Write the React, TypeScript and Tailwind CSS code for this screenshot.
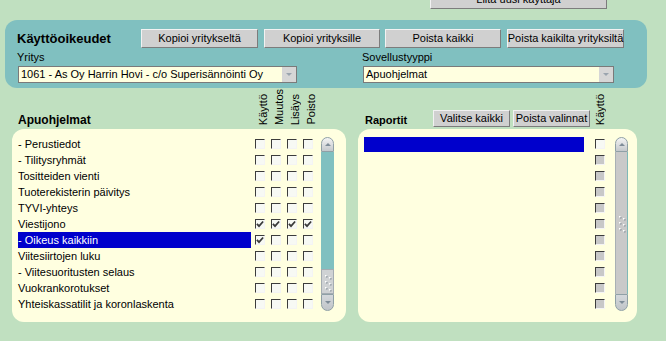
import React from "react";

const rows: { label: string; checks: number[]; selected?: boolean }[] = [
  { label: "- Perustiedot", checks: [0, 0, 0, 0] },
  { label: "- Tilitysryhmät", checks: [0, 0, 0, 0] },
  { label: "Tositteiden vienti", checks: [0, 0, 0, 0] },
  { label: "Tuoterekisterin päivitys", checks: [0, 0, 0, 0] },
  { label: "TYVI-yhteys", checks: [0, 0, 0, 0] },
  { label: "Viestijono", checks: [1, 1, 1, 1] },
  { label: "- Oikeus kaikkiin", checks: [1, 0, 0, 0], selected: true },
  { label: "Viitesiirtojen luku", checks: [0, 0, 0, 0] },
  { label: "- Viitesuoritusten selaus", checks: [0, 0, 0, 0] },
  { label: "Vuokrankorotukset", checks: [0, 0, 0, 0] },
  { label: "Yhteiskassatilit ja koronlaskenta", checks: [0, 0, 0, 0] },
];

function Btn({ className, children }: { className: string; children: React.ReactNode }) {
  return (
    <div
      className={
        "flex items-center justify-center shrink-0 whitespace-nowrap bg-[#d0d0d0] border border-t-[#f2f2f2] border-l-[#f2f2f2] border-r-[#7c7c7c] border-b-[#7c7c7c] text-[11px] text-black " +
        className
      }
    >
      {children}
    </div>
  );
}

function Check({ checked, disabled }: { checked?: boolean; disabled?: boolean }) {
  return (
    <div
      className={
        "w-[10px] h-[10px] border-t border-l border-t-[#3c3c3c] border-l-[#3c3c3c] border-r border-b border-r-[#f4f4f4] border-b-[#f4f4f4] flex items-center justify-center " +
        (disabled ? "bg-[#c8c8c8]" : "bg-[#f7f9f4]")
      }
    >
      {checked ? (
        <svg width="9" height="8" viewBox="0 0 9 8">
          <path d="M1 3.8 L3.4 6.4 L8 1.2" fill="none" stroke="#3a3a3a" strokeWidth="2" />
        </svg>
      ) : null}
    </div>
  );
}

function Select({ className, text }: { className: string; text: string }) {
  return (
    <div
      className={
        "h-[17px] flex items-center bg-[#ffffe0] border border-[#7a7a7a] shrink-0 " + className
      }
    >
      <div className="flex-1 pl-[2px] text-[11px] leading-[15px] whitespace-nowrap overflow-hidden">{text}</div>
      <div className="w-[14px] h-[15px] bg-[#d6d6d6] flex items-center justify-center">
        <div className="w-0 h-0 border-l-[3px] border-r-[3px] border-t-[3px] border-l-transparent border-r-transparent border-t-[#9aa4ae]" />
      </div>
    </div>
  );
}

function Grip() {
  return (
    <svg width="9" height="20" viewBox="0 0 9 20">
      {[
        [2, 3],
        [6, 5],
        [2, 9],
        [6, 11],
        [2, 15],
        [6, 17],
      ].map(([x, y], i) => (
        <g key={i}>
          <rect x={x + 1} y={y + 1} width="1.5" height="1.5" fill="#8a949c" />
          <rect x={x} y={y} width="1.5" height="1.5" fill="#ffffff" />
        </g>
      ))}
    </svg>
  );
}

function ArrowUp() {
  return (
    <div className="h-[15px] rounded-t-[7px] border border-[#8fa0a6] bg-gradient-to-b from-[#f4f4f4] to-[#c4c8cc] flex items-center justify-center">
      <div className="w-0 h-0 border-l-[3px] border-r-[3px] border-b-[3px] border-l-transparent border-r-transparent border-b-[#7e8c98]" />
    </div>
  );
}

function ArrowDown() {
  return (
    <div className="h-[17px] rounded-b-[7px] border border-[#8fa0a6] bg-gradient-to-b from-[#d4d8dc] to-[#c0c4c8] flex items-center justify-center">
      <div className="w-0 h-0 border-l-[3px] border-r-[3px] border-t-[3px] border-l-transparent border-r-transparent border-t-[#7e8c98]" />
    </div>
  );
}

function RotHead({ children }: { children: React.ReactNode }) {
  return (
    <div className="w-[16px] flex justify-center pb-[4px]">
      <span className="[writing-mode:vertical-rl] rotate-180 text-[11px] leading-[11px] whitespace-nowrap">{children}</span>
    </div>
  );
}

export default function App() {
  return (
    <div
      className="w-[666px] h-[341px] overflow-hidden bg-[#c0e0c0] text-black text-[11px]"
      style={{ fontFamily: '"Liberation Sans", Arial, sans-serif' }}
    >
      {/* top strip with clipped button */}
      <div className="h-[9px] flex items-end pl-[430px]">
        <Btn className="w-[177px] h-[20px]">Liitä uusi käyttäjä</Btn>
      </div>

      {/* teal panel */}
      <div className="mt-[11px] ml-[5px] w-[642px] h-[68px] rounded-[12px] bg-[#80c0c0] pt-[9px]">
        <div className="flex items-center h-[19px]">
          <div className="w-[136px] pl-[12px] font-bold text-[13px] leading-[19px] whitespace-nowrap">Käyttöoikeudet</div>
          <Btn className="w-[117px] h-[19px]">Kopioi yritykseltä</Btn>
          <Btn className="w-[116px] h-[19px] ml-[6px]">Kopioi yrityksille</Btn>
          <Btn className="w-[116px] h-[19px] ml-[5px]">Poista kaikki</Btn>
          <Btn className="w-[117px] h-[19px] ml-[6px]">Poista kaikilta yrityksiltä</Btn>
        </div>
        <div className="mt-[3px] h-[13px] flex text-[11px] leading-[13px]">
          <div className="w-[357px] pl-[12px]">Yritys</div>
          <div>Sovellustyyppi</div>
        </div>
        <div className="mt-[2px] flex">
          <Select className="ml-[13px] w-[279px]" text="1061 - As Oy Harrin Hovi - c/o Superisännöinti Oy" />
          <Select className="ml-[66px] w-[251px]" text="Apuohjelmat" />
        </div>
      </div>

      {/* lower area */}
      <div className="flex ml-[12px]">
        {/* left column */}
        <div className="w-[334px] shrink-0">
          <div className="h-[41px] flex items-end">
            <div className="w-[243px] pl-[6px] pb-[2px] font-bold text-[12px] leading-[14px]">Apuohjelmat</div>
            <RotHead>Käyttö</RotHead>
            <RotHead>Muutos</RotHead>
            <RotHead>Lisäys</RotHead>
            <RotHead>Poisto</RotHead>
          </div>
          <div className="h-[193px] rounded-[12px] bg-[#ffffe0] pt-[7px] pl-[6px] flex">
            <div className="flex flex-col">
              {rows.map((r, i) => (
                <div key={i} className="h-[16px] flex items-center">
                  <div
                    className={
                      "w-[233px] h-[16px] leading-[16px] whitespace-nowrap " +
                      (r.selected ? "bg-[#0000cc] text-white" : "")
                    }
                  >
                    {r.label}
                  </div>
                  <div className="ml-[4px] flex">
                    {r.checks.map((c, j) => (
                      <div key={j} className="w-[16px] flex items-center">
                        <Check checked={c === 1} />
                      </div>
                    ))}
                  </div>
                </div>
              ))}
            </div>
            <div className="ml-[2px] mt-[1px] w-[13px] h-[174px] flex flex-col">
              <ArrowUp />
              <div className="flex-1 bg-[#80c0c0]" />
              <div className="h-[25px] bg-[#cfd2d4] border border-[#a4acb2] flex items-center justify-center">
                <Grip />
              </div>
              <ArrowDown />
            </div>
          </div>
        </div>

        {/* right column */}
        <div className="w-[279px] ml-[12px] shrink-0">
          <div className="h-[41px] flex items-end">
            <div className="w-[75px] pl-[7px] pb-[2px] font-bold text-[11px] leading-[14px]">Raportit</div>
            <Btn className="w-[77px] h-[17px] mb-[2px]">Valitse kaikki</Btn>
            <Btn className="w-[77px] h-[17px] mb-[2px] ml-[3px]">Poista valinnat</Btn>
            <div className="ml-[2px]">
              <RotHead>Käyttö</RotHead>
            </div>
          </div>
          <div className="h-[193px] rounded-[12px] bg-[#ffffe0] pt-[7px] pl-[6px] flex">
            <div className="w-[220px]">
              <div className="h-[16px] pt-[1px]">
                <div className="h-[15px] bg-[#0000cc]" />
              </div>
            </div>
            <div className="ml-[11px] flex flex-col">
              {rows.map((_, i) => (
                <div key={i} className="h-[16px] flex items-center">
                  <Check disabled={i !== 0} />
                </div>
              ))}
            </div>
            <div className="ml-[10px] mt-[1px] w-[13px] h-[174px] flex flex-col">
              <ArrowUp />
              <div className="flex-1 bg-[#c9c9c9] border-l border-r border-l-[#a8b0b4] border-r-[#7fb8b8] flex items-center justify-center">
                <Grip />
              </div>
              <ArrowDown />
            </div>
          </div>
        </div>
      </div>
    </div>
  );
}
